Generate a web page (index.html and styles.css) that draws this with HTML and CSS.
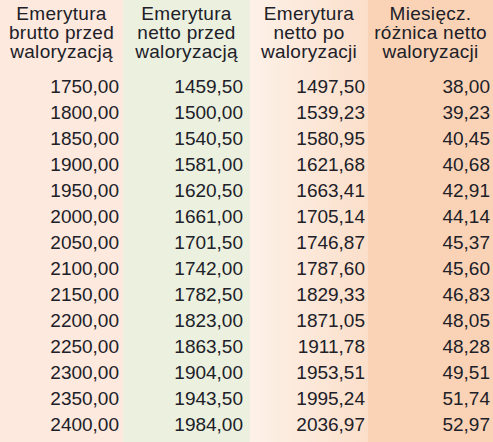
FILE: index.html
```html
<!DOCTYPE html>
<html lang="pl">
<head>
    <meta charset="UTF-8">
    <meta name="viewport" content="width=device-width, initial-scale=1.0">
    <title>Waloryzacja emerytur</title>
    <link rel="stylesheet" href="styles.css">
</head>
<body>
    <table class="pension-table">
        <colgroup>
            <col class="col-brutto">
            <col class="col-netto">
            <col class="col-po">
            <col class="col-diff">
        </colgroup>
        <thead>
            <tr>
                <th>Emerytura<br>brutto przed<br>waloryzacją</th>
                <th>Emerytura<br>netto przed<br>waloryzacją</th>
                <th>Emerytura<br>netto po<br>waloryzacji</th>
                <th>Miesięcz.<br>różnica netto<br>waloryzacji</th>
            </tr>
        </thead>
        <tbody>
            <tr><td>1750,00</td><td>1459,50</td><td>1497,50</td><td>38,00</td></tr>
            <tr><td>1800,00</td><td>1500,00</td><td>1539,23</td><td>39,23</td></tr>
            <tr><td>1850,00</td><td>1540,50</td><td>1580,95</td><td>40,45</td></tr>
            <tr><td>1900,00</td><td>1581,00</td><td>1621,68</td><td>40,68</td></tr>
            <tr><td>1950,00</td><td>1620,50</td><td>1663,41</td><td>42,91</td></tr>
            <tr><td>2000,00</td><td>1661,00</td><td>1705,14</td><td>44,14</td></tr>
            <tr><td>2050,00</td><td>1701,50</td><td>1746,87</td><td>45,37</td></tr>
            <tr><td>2100,00</td><td>1742,00</td><td>1787,60</td><td>45,60</td></tr>
            <tr><td>2150,00</td><td>1782,50</td><td>1829,33</td><td>46,83</td></tr>
            <tr><td>2200,00</td><td>1823,00</td><td>1871,05</td><td>48,05</td></tr>
            <tr><td>2250,00</td><td>1863,50</td><td>1911,78</td><td>48,28</td></tr>
            <tr><td>2300,00</td><td>1904,00</td><td>1953,51</td><td>49,51</td></tr>
            <tr><td>2350,00</td><td>1943,50</td><td>1995,24</td><td>51,74</td></tr>
            <tr><td>2400,00</td><td>1984,00</td><td>2036,97</td><td>52,97</td></tr>
        </tbody>
    </table>
</body>
</html>
```

FILE: styles.css
```css
* {
    margin: 0;
    padding: 0;
    box-sizing: border-box;
}

body {
    font-family: 'Liberation Sans', Arial, sans-serif;
    background-color: #fce9dd;
    color: #202028;
}

.pension-table {
    width: 493px;
    border-collapse: collapse;
    table-layout: fixed;
    font-size: 19px;
}

.col-brutto {
    width: 123px;
    background-color: #fde9dd;
}

.col-netto {
    width: 127px;
    background-color: #ecf0df;
}

.col-po {
    width: 118px;
    background: linear-gradient(90deg, #fdf1e8, #fbdfca);
}

.col-diff {
    width: 125px;
    background-color: #fad3b6;
}

th {
    height: 74px;
    padding-top: 4px;
    font-weight: normal;
    line-height: 19px;
    text-align: center;
    vertical-align: top;
    letter-spacing: 0.3px;
}

td {
    height: 26px;
    padding-right: 4px;
    line-height: 26px;
    text-align: right;
    vertical-align: top;
}

td:nth-child(2) {
    padding-right: 7px;
}

td:nth-child(3),
td:nth-child(4) {
    padding-right: 3px;
}

tbody tr:last-child td {
    height: 30px;
}
```
